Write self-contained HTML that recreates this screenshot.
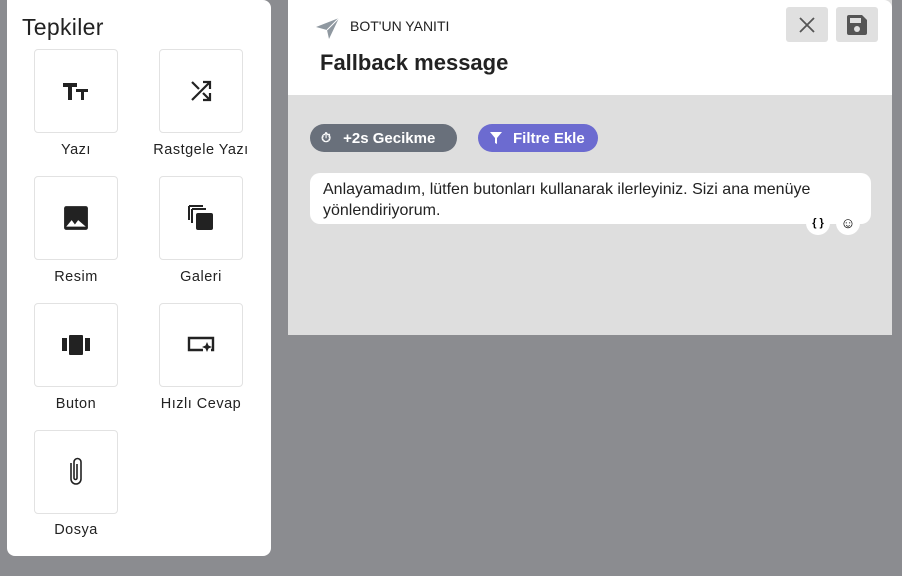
<!DOCTYPE html>
<html><head><meta charset="utf-8"><style>
*{box-sizing:border-box;margin:0;padding:0}
body{width:902px;height:576px;background:#8b8c90;position:relative;overflow:hidden;font-family:"Liberation Sans",sans-serif}
.left{position:absolute;left:7px;top:0;width:264px;height:556px;background:#fff;border-radius:0 8px 8px 8px}
.left h1{position:absolute;left:15px;top:14px;font-size:23px;font-weight:normal;color:#222;letter-spacing:.3px}
.tile{position:absolute;width:84px;height:84px;border:1px solid #e2e2e2;border-radius:4px;background:#fff;display:flex;align-items:center;justify-content:center}
.lbl{position:absolute;width:130px;text-align:center;font-size:14.5px;color:#222;letter-spacing:.5px}
.right{position:absolute;left:288px;top:0;width:604px;height:335px;background:#dedede}
.top{position:absolute;left:0;top:0;width:604px;height:95px;background:#fff;border-top-right-radius:8px}
.btn{position:absolute;top:7px;width:42px;height:35px;background:#e0e0e0;border-radius:3px;display:flex;align-items:center;justify-content:center}
.pill{position:absolute;top:124px;height:28px;border-radius:14px;color:#fff;font-weight:bold;font-size:15px;display:flex;align-items:center}
.msg{position:absolute;left:22px;top:173px;width:561px;height:51px;background:#fff;border-radius:10px;padding:6px 13px;font-size:16px;line-height:21px;color:#222}
.ci{position:absolute;top:211px;width:24px;height:24px;border-radius:12px;background:#fff;display:flex;align-items:center;justify-content:center;font-size:11px;font-weight:bold}
</style></head><body>
<div class="left">
<h1>Tepkiler</h1>
<div class="tile" style="left:27px;top:49px"><svg width="26" height="20" viewBox="0 0 26 20"><path d="M0 2h14v4H9v13H5V6H0z M13 8h12v3h-4v8h-3v-8h-5z" fill="#222"/></svg></div>
<div class="lbl" style="left:4px;top:142px">Yazı</div>
<div class="tile" style="left:152px;top:49px"><svg width="24" height="24" viewBox="0 0 24 24"><path d="M3 21L21 3M14 3h7v7M3 3l7 7M14 14l7 7M14 21h7v-7" stroke="#222" stroke-width="2.2" fill="none"/></svg></div>
<div class="lbl" style="left:129px;top:142px">Rastgele Yazı</div>
<div class="tile" style="left:27px;top:176px"><svg width="26" height="26" viewBox="0 0 24 24"><rect x="1" y="1" width="22" height="22" rx="2" fill="#222"/><path d="M3 20l5-6 3 4 3-4 7 6z" fill="#fff"/></svg></div>
<div class="lbl" style="left:4px;top:269px">Resim</div>
<div class="tile" style="left:152px;top:176px"><svg width="28" height="28" viewBox="0 0 28 28"><path d="M2 2h14M2 2v14M5 5h14M5 5v14" stroke="#222" stroke-width="2" fill="none"/><rect x="9" y="9" width="17" height="17" rx="2" fill="#222"/></svg></div>
<div class="lbl" style="left:129px;top:269px">Galeri</div>
<div class="tile" style="left:27px;top:303px"><svg width="28" height="20" viewBox="0 0 28 20"><rect x="0" y="3" width="5" height="13" fill="#222"/><rect x="7" y="0" width="14" height="20" rx="1" fill="#222"/><rect x="23" y="3" width="5" height="13" fill="#222"/></svg></div>
<div class="lbl" style="left:4px;top:396px">Buton</div>
<div class="tile" style="left:152px;top:303px"><svg width="28" height="18" viewBox="0 0 28 18"><path d="M16 14H2V2h24v12h-2" stroke="#222" stroke-width="2.4" fill="none"/><path d="M20 6l1.5 3.5L25 11l-3.5 1.5L20 16l-1.5-3.5L15 11l3.5-1.5z" fill="#222"/></svg></div>
<div class="lbl" style="left:129px;top:396px">Hızlı Cevap</div>
<div class="tile" style="left:27px;top:430px"><svg width="18" height="32" viewBox="0 0 18 32"><path d="M4 7v16a5 5 0 0 0 10 0V6a3.5 3.5 0 0 0-7 0v16a1.5 1.5 0 0 0 3 0V8" stroke="#222" stroke-width="1.6" fill="none"/></svg></div>
<div class="lbl" style="left:4px;top:522px">Dosya</div>
</div>
<div class="right">
<div class="top">
<svg style="position:absolute;left:28px;top:18px" width="24" height="22" viewBox="0 0 24 22"><path d="M0 9L23 0 13 21 11 12z" fill="#8f98a0"/><path d="M11 12L23 0" stroke="#fff" stroke-width="1"/></svg>
<div style="position:absolute;left:62px;top:18px;font-size:14px;color:#222">BOT'UN YANITI</div>
<div style="position:absolute;left:32px;top:50px;font-size:22px;font-weight:bold;color:#222">Fallback message</div>
<div class="btn" style="left:498px"><svg width="16" height="16" viewBox="0 0 16 16"><path d="M1 1l14 14M15 1L1 15" stroke="#555" stroke-width="1.8"/></svg></div>
<div class="btn" style="left:548px;width:42px"><svg width="20" height="20" viewBox="0 0 20 20"><path d="M0 2a2 2 0 0 1 2-2h13l5 5v13a2 2 0 0 1-2 2H2a2 2 0 0 1-2-2z" fill="#555"/><rect x="3" y="3" width="11" height="5" fill="#e0e0e0"/><circle cx="10" cy="14" r="3" fill="#e0e0e0"/></svg></div>
</div>
<div class="pill" style="left:22px;width:147px;background:#69707b;padding-left:11px"><span style="font-size:13px">⏱</span><span style="margin-left:12px">+2s Gecikme</span></div>
<div class="pill" style="left:190px;width:120px;background:#6c6bd0;padding-left:12px"><svg width="12" height="12" viewBox="0 0 12 12"><path d="M0 0h12L7 6v6L5 11V6z" fill="#fff"/></svg><span style="margin-left:11px">Filtre Ekle</span></div>
<div class="msg">Anlayamadım, lütfen butonları kullanarak ilerleyiniz. Sizi ana menüye yönlendiriyorum.</div>
<div class="ci" style="left:518px">{ }</div>
<div class="ci" style="left:548px;font-size:15px;font-weight:normal">☺</div>
</div>
</body></html>
